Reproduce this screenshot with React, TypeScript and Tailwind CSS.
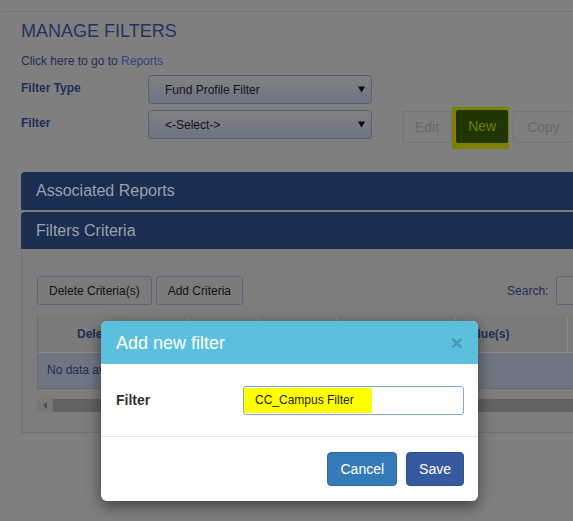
import React from "react";

function Select({ text }: { text: string }) {
  return (
    <div className="w-[224px] h-[29px] shrink-0 rounded-[3px] border border-[#56637f] bg-linear-to-b from-[#828282] to-[#6d7383] flex items-center justify-between pl-[16px] pr-[6px] text-[12px] text-[#141414]">
      <span>{text}</span>
      <svg width="7" height="7" viewBox="0 0 7 7">
        <path d="M0 0.5h7L3.5 6.5z" fill="#0d0d0d" />
      </svg>
    </div>
  );
}

export default function App() {
  return (
    <div className="relative w-[573px] h-[521px] overflow-hidden bg-[#7f7f7f] font-['Liberation_Sans',Arial,sans-serif]">
      <div className="pt-[11px] pl-[1px]">
        <div className="h-[510px] border-t border-l border-t-[#737373] border-l-[#747b8a] pl-[19px] pt-[9px]">
          <h1 className="text-[18px] leading-[20px] font-normal text-[#1f3463]">MANAGE FILTERS</h1>
          <p className="mt-[12px] text-[12px] leading-[17px] text-[#1e2f5a]">
            Click here to go to <span className="text-[#2f4583]">Reports</span>
          </p>
          <div className="mt-[5px] flex">
            <div className="w-[127px] shrink-0 pt-[5px] text-[12px] leading-[17px] font-bold text-[#1e2f5a]">Filter Type</div>
            <Select text="Fund Profile Filter" />
          </div>
          <div className="mt-[6px] flex items-start h-[29px]">
            <div className="w-[127px] shrink-0 pt-[5px] text-[12px] leading-[17px] font-bold text-[#1e2f5a]">Filter</div>
            <Select text={"<-Select->"} />
            <button className="ml-[30px] mt-[1px] h-[32px] shrink-0 px-[12px] rounded-[3px] border border-[#747474] bg-[#7f7f7f] text-[14px] text-[#6a6a6a]">
              Edit
            </button>
            <div className="-mt-[3px] shrink-0 bg-[#808000] pl-[4px] pr-[1px] pt-[3px] pb-[6px]">
              <button className="h-[33px] px-[12px] rounded-[2px] bg-[#213500] text-[14px] text-[#6f7d00]">New</button>
            </div>
            <button className="ml-[4px] mt-[1px] h-[32px] shrink-0 px-[13px] rounded-[3px] border border-[#747474] bg-[#7f7f7f] text-[14px] text-[#6a6a6a]">
              Copy
            </button>
          </div>

          <div className="mt-[33px] w-[580px]">
            <div className="h-[38px] rounded-t-[4px] bg-[#1b2d50] pl-[15px] flex items-center text-[16px] text-[#9ca2ac]">
              Associated Reports
            </div>
            <div className="mt-[2px] h-[37px] rounded-t-[4px] bg-[#1b2d50] pl-[15px] flex items-center text-[16px] text-[#9ca2ac]">
              Filters Criteria
            </div>
            <div className="h-[184px] border border-t-0 border-[#727272] bg-[#7d7d7d] pl-[15px] pt-[27px]">
              <div className="flex items-center h-[29px] whitespace-nowrap">
                <button className="shrink-0 h-[29px] px-[11px] rounded-[3px] border border-[#5a6680] bg-[#7b7b7b] text-[12px] text-[#111]">
                  Delete Criteria(s)
                </button>
                <button className="shrink-0 ml-[4px] h-[29px] px-[11px] rounded-[3px] border border-[#5a6680] bg-[#7b7b7b] text-[12px] text-[#111]">
                  Add Criteria
                </button>
                <span className="shrink-0 ml-[264px] text-[12px] text-[#1e2f5a]">Search:</span>
                <div className="shrink-0 ml-[8px] w-[100px] h-[29px] rounded-[3px] border border-[#5a6680] bg-[#7f7f7f]" />
              </div>
              <div className="mt-[12px] w-[560px] overflow-hidden border-l border-b border-[#6c6c6c]">
                <table className="w-[620px] table-fixed border-collapse text-[12px]">
                  <colgroup>
                    <col className="w-[149px]" />
                    <col className="w-[70px]" />
                    <col className="w-[79px]" />
                    <col className="w-[119px]" />
                    <col className="w-[112px]" />
                    <col className="w-[91px]" />
                  </colgroup>
                  <thead>
                    <tr className="h-[35px] bg-[#7b7b7b]">
                      <th className="border-r border-b border-[#8a8a8a] pl-[39px] text-left font-bold text-[#1e2f5a]">Delete</th>
                      <th className="border-r border-b border-[#8a8a8a]"></th>
                      <th className="border-r border-b border-[#8a8a8a]"></th>
                      <th className="border-r border-b border-[#8a8a8a]"></th>
                      <th className="border-r border-b border-[#8a8a8a] pl-[8px] text-left font-bold text-[#1e2f5a]">Value(s)</th>
                      <th className="border-b border-[#8a8a8a]"></th>
                    </tr>
                  </thead>
                  <tbody>
                    <tr className="h-[36px] bg-[#6f7582]">
                      <td colSpan={6} className="pl-[9px] text-left text-[#1e2d55]">No data available in table</td>
                    </tr>
                  </tbody>
                </table>
              </div>
              <div className="mt-[10px] w-[560px] h-[13px] flex bg-[#787878]">
                <div className="w-[16px] flex items-center justify-center">
                  <svg width="4" height="7" viewBox="0 0 4 7">
                    <path d="M4 0v7L0 3.5z" fill="#515151" />
                  </svg>
                </div>
                <div className="flex-1 bg-[#626262]" />
              </div>
            </div>
          </div>
        </div>
      </div>

      <div className="absolute left-[101px] top-[321px] w-[377px] rounded-[6px] bg-white shadow-[0_5px_15px_rgba(0,0,0,0.5)] overflow-hidden">
        <div className="h-[43px] bg-[#5bc0de] flex items-center justify-between px-[15px]">
          <span className="text-[18px] leading-[20px] text-white">Add new filter</span>
          <span className="text-[21px] font-bold leading-none text-[#4a9ab2]">×</span>
        </div>
        <div className="h-[73px] flex items-center pl-[15px] border-b border-[#e5e5e5]">
          <label className="w-[127px] text-[14px] font-bold text-[#333]">Filter</label>
          <div className="w-[221px] h-[29px] border border-[#7fa7d9] rounded-[3px] flex py-[1px]">
            <div className="w-[128px] bg-[#ffff00] pl-[11px] flex items-center text-[12px] text-[#222]">CC_Campus Filter</div>
          </div>
        </div>
        <div className="h-[64px] flex justify-end items-start pt-[15px] pr-[14px] gap-[9px]">
          <button className="h-[34px] px-[12px] rounded-[4px] bg-[#337ab7] border border-[#2e6da4] text-white text-[14px]">Cancel</button>
          <button className="h-[34px] px-[12px] rounded-[4px] bg-[#365a9d] border border-[#2f4f8c] text-white text-[14px]">Save</button>
        </div>
      </div>
    </div>
  );
}
